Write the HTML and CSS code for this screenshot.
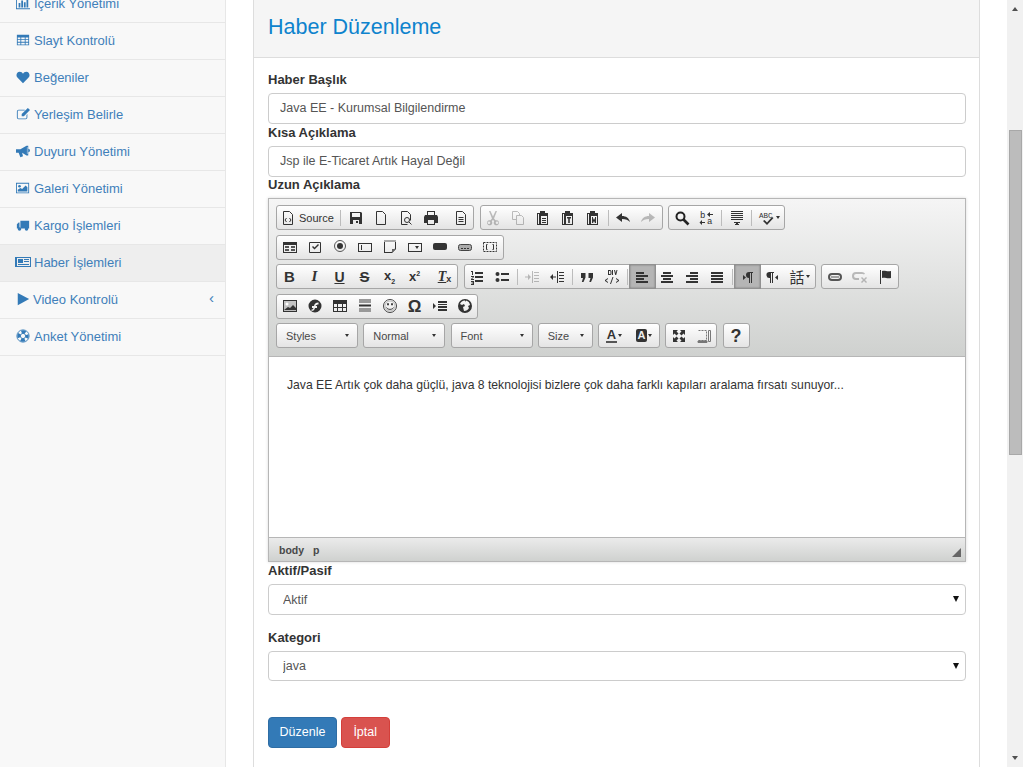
FILE: index.html
```html
<!DOCTYPE html>
<html lang="tr">
<head>
    <meta charset="UTF-8">
    <title>Haber Düzenleme</title>
    <link rel="stylesheet" href="styles.css">
</head>
<body>
<div class="page">
    <nav class="sidebar">
        <a class="side-item"><svg class="side-icon" viewBox="0 0 16 16"><path d="M0 2h1v12h15v1H0z"/><path d="M3 8h2v5H3zM6 5h2v8H6zM9 7h2v6H9zM12 3h2v10h-2z"/></svg>İçerik Yönetimi</a>
        <a class="side-item"><svg class="side-icon" viewBox="0 0 16 16"><path fill-rule="evenodd" d="M1 2h14v12H1zM2 5v2h3V5zm4 0v2h4V5zm5 0v2h3V5zM2 8v2h3V8zm4 0v2h4V8zm5 0v2h3V8zM2 11v2h3v-2zm4 0v2h4v-2zm5 0v2h3v-2z"/></svg>Slayt Kontrolü</a>
        <a class="side-item"><svg class="side-icon" viewBox="0 0 16 16"><path d="M8 15 1.600 8.600C-.6 6.200.8 2 4.300 2 6 2 7.300 3 8 4.200 8.700 3 10 2 11.700 2c3.500 0 4.900 4.200 2.700 6.600z"/></svg>Beğeniler</a>
        <a class="side-item"><svg class="side-icon" viewBox="0 0 16 16"><path d="M3 3h7v1H3a1 1 0 0 0-1 1v7a1 1 0 0 0 1 1h8a1 1 0 0 0 1-1V9l1-1v4a2 2 0 0 1-2 2H3a2 2 0 0 1-2-2V5a2 2 0 0 1 2-2z"/><path d="M13.500 1 16 3.500 9 10.500H6.500V8z"/></svg>Yerleşim Belirle</a>
        <a class="side-item"><svg class="side-icon" viewBox="0 0 16 16"><path fill-rule="evenodd" d="M0 6h5l7-4h2v11h-2L7 10l1 4-3 1-2-5H0zM12.500 3.500v8h.5v-8z"/><path d="M14 5.500a2 2 0 0 1 0 4z"/></svg>Duyuru Yönetimi</a>
        <a class="side-item"><svg class="side-icon" viewBox="0 0 16 16"><path fill-rule="evenodd" d="M0 2h15v12H0zm1 1v10h13V3z"/><circle cx="4" cy="6" r="1.500"/><path d="M2 12V10l3-2 2 1 4-4 2 2v5z"/></svg>Galeri Yönetimi</a>
        <a class="side-item"><svg class="side-icon" viewBox="0 0 16 16"><path d="M5 3h10v9H5zM1 7l2-2h1v7H1z"/><circle cx="4" cy="12.500" r="2"/><circle cx="12" cy="12.500" r="2"/></svg>Kargo İşlemleri</a>
        <a class="side-item is-current"><svg class="side-icon wide" viewBox="0 0 16 14"><path fill-rule="evenodd" d="M0 2h16v10H0zm2 1v8h13V3z"/><path d="M3 4h5v4H3zM9 4h5v1H9zM9 6h5v1H9zM3 9h11v1H3z"/></svg>Haber İşlemleri</a>
        <a class="side-item video"><svg class="side-icon" viewBox="0 0 16 16"><path d="M2 1 15 8 2 15z"/></svg>Video Kontrolü<span class="side-arrow">‹</span></a>
        <a class="side-item"><svg class="side-icon" viewBox="0 0 16 16"><circle cx="8" cy="8" r="7" fill="none" stroke="#337ab7"/><circle cx="8" cy="8" r="3" fill="none" stroke="#337ab7"/><circle class="ring" cx="8" cy="8" r="4.750" fill="none" stroke="#337ab7" stroke-width="3.500" stroke-dasharray="4.700 2.760" stroke-dashoffset="2.350"/></svg>Anket Yönetimi</a>
    </nav>

    <main class="content">
        <section class="panel">
            <h2 class="panel-title">Haber Düzenleme</h2>
            <form class="panel-body">
                <label class="field-label">Haber Başlık</label>
                <input class="field" type="text" value="Java EE - Kurumsal Bilgilendirme">
                <label class="field-label">Kısa Açıklama</label>
                <input class="field" type="text" value="Jsp ile E-Ticaret Artık Hayal Değil">
                <label class="field-label tight">Uzun Açıklama</label>

                <div class="editor">
                    <div class="toolbar">
                        <div class="tb-row">
                            <div class="tb-group">
                                <span class="tb-btn source"><svg viewBox="0 0 16 16" fill="none" stroke="#333"><path d="M3.500 1.500h6l3 3v10h-9z"/><path d="M6.500 8 5 10l1.500 2M9.500 8 11 10l-1.500 2"/></svg>Source</span>
                                <i class="tb-sep"></i>
                                <span class="tb-btn"><svg viewBox="0 0 16 16"><path fill-rule="evenodd" d="M2 2h11l1 1v11H2zm2 1v4h8V3zm1 7v4h6v-4z"/><path d="M8 11h2v2H8z"/></svg></span>
                                <span class="tb-btn"><svg viewBox="0 0 16 16" fill="none" stroke="#333"><path d="M3.500 1.500h6l3 3v10h-9z"/></svg></span>
                                <span class="tb-btn"><svg viewBox="0 0 16 16" fill="none" stroke="#333"><path d="M3.500 14.500v-13h6l3 3v6M3.500 14.500h6"/><circle cx="9" cy="10" r="2.500"/><path d="m11 12 2.500 2.500"/></svg></span>
                                <span class="tb-btn"><svg viewBox="0 0 16 16"><path fill-rule="evenodd" d="M4 1h8v4h2l1 2v6h-3v2H4v-2H1V7l1-2h2zm1 1v3h6V2zm0 8v4h6v-4z"/></svg></span>
                                <span class="tb-btn shift"><svg viewBox="0 0 16 16" fill="none" stroke="#333"><path d="M3.500 1.500h6l3 3v10h-9z"/><path d="M5.500 7.500h5M5.500 9.500h5M5.500 11.500h5"/></svg></span>
                            </div>
                            <div class="tb-group pad">
                                <span class="tb-btn off"><svg viewBox="0 0 16 16"><path fill-rule="evenodd" d="M4 1h1.500L8 6.500 10.500 1H12L9 8.500l1.500 1.800a2.600 2.600 0 1 1-1.300 1L8 9.800l-1.200 1.500a2.600 2.600 0 1 1-1.300-1L7 8.500zM4 11.500a1.300 1.300 0 1 0 0 2.600 1.300 1.300 0 0 0 0-2.600zm8 0a1.300 1.300 0 1 0 0 2.600 1.300 1.300 0 0 0 0-2.600z"/></svg></span>
                                <span class="tb-btn off"><svg viewBox="0 0 16 16" fill="none" stroke="#333"><path d="M2.500 1.500h5l2 2v6h-7z"/><path d="M6.500 5.500h5l2 2v7h-7z" fill="#eee"/></svg></span>
                                <span class="tb-btn"><svg viewBox="0 0 16 16"><path fill-rule="evenodd" d="M2 3h3V1h5v2h3v12H2zm1 1v10h1V4zm3 2v8h6V6z"/><path d="M7 8h4v1H7zM7 10h4v1H7zM7 12h4v1H7z"/></svg></span>
                                <span class="tb-btn"><svg viewBox="0 0 16 16"><path fill-rule="evenodd" d="M2 3h3V1h5v2h3v12H2zm1 1v10h1V4zm3 2v8h6V6z"/><path d="M7 7h4v1.500H9.800V13H8.200V8.500H7z"/></svg></span>
                                <span class="tb-btn"><svg viewBox="0 0 16 16"><path fill-rule="evenodd" d="M2 3h3V1h5v2h3v12H2zm1 1v10h1V4zm3 2v8h6V6z"/><path d="M7 7h1v3l1-2 1 2V7h1v6h-1l-1-2-1 2H7z"/></svg></span>
                                <i class="tb-sep"></i>
                                <span class="tb-btn"><svg viewBox="0 0 16 16"><path d="M7 3v3c4 0 7 2 8 6-2-2-4-3-8-3v3L1 7.500z"/></svg></span>
                                <span class="tb-btn off"><svg viewBox="0 0 16 16"><path d="M9 3v3c-4 0-7 2-8 6 2-2 4-3 8-3v3l6-4.500z"/></svg></span>
                            </div>
                            <div class="tb-group">
                                <span class="tb-btn"><svg viewBox="0 0 16 16" fill="none" stroke="#222" stroke-width="2"><circle cx="6.500" cy="6.500" r="4"/><path d="m9.500 9.500 5 5" stroke-width="2.600"/></svg></span>
                                <span class="tb-btn"><svg viewBox="0 0 16 16"><text x="1" y="8" font-family="Liberation Mono" font-size="9" fill="#333">b</text><text x="8" y="14" font-family="Liberation Mono" font-size="9" fill="#333">a</text><path d="M11 1v2h3v1h-3v2L8 3.500zM3 9v2h3v1H3v2l-2.500-2.500z" transform="translate(0 1)"/></svg></span>
                                <i class="tb-sep"></i>
                                <span class="tb-btn"><svg viewBox="0 0 16 16"><path d="M2 1h12v1H2zM2 3h12v1H2zM2 5h12v1H2zM2 7h12v1H2zM2 9h12v1H2zM5 12h6v1H9v1h1v1H6v-1h1v-1H5z"/></svg></span>
                                <i class="tb-sep"></i>
                                <span class="tb-btn wide-btn"><svg viewBox="0 0 16 16"><text x="0" y="8" font-family="Liberation Mono" font-size="7.500" fill="#333">ABC</text><path d="m4 11 1.500-1L8 12.500 13 7l1.500 1L8 15z"/></svg><b class="caret"></b></span>
                            </div>
                        </div>
                        <div class="tb-row">
                            <div class="tb-group pad">
                                <span class="tb-btn"><svg viewBox="0 0 16 16"><path fill-rule="evenodd" d="M1 3h14v11H1zm1 3v7h12V6z"/><path d="M3 7h4v2H3zM9 7h4v2H9zM3 10h4v2H3zM9 10h4v2H9z" fill="#555"/></svg></span>
                                <span class="tb-btn"><svg viewBox="0 0 16 16"><path fill-rule="evenodd" d="M3 3h10a1 1 0 0 1 1 1v9a1 1 0 0 1-1 1H3a1 1 0 0 1-1-1V4a1 1 0 0 1 1-1zm0 1v9h10V4z"/><path d="M5 8l1-1 1.500 1.500L11 5l1 1-4.500 4.500z"/></svg></span>
                                <span class="tb-btn"><svg viewBox="0 0 16 16"><circle cx="8" cy="7" r="5.500" fill="none" stroke="#555"/><circle cx="8" cy="7" r="3"/></svg></span>
                                <span class="tb-btn"><svg viewBox="0 0 16 16"><path fill-rule="evenodd" d="M1 4h14v9H1zm1 1v7h12V5z"/><path d="M4 6h1v5H4z"/></svg></span>
                                <span class="tb-btn"><svg viewBox="0 0 16 16"><path fill-rule="evenodd" d="M2 2h12v8l-4 4H2zm1 1v10h6.500L13 9.500V3z"/><path d="M10 14v-4h4z" fill="#666"/><path d="M2 1h12v2H2z" fill="#aaa"/></svg></span>
                                <span class="tb-btn"><svg viewBox="0 0 16 16"><path fill-rule="evenodd" d="M1 4h14v9H1zm1 1v7h12V5z"/><path d="M8 7h4l-2 3z"/></svg></span>
                                <span class="tb-btn"><svg viewBox="0 0 16 16"><rect x="1" y="4" width="14" height="7" rx="2"/></svg></span>
                                <span class="tb-btn"><svg viewBox="0 0 16 16"><rect x="1.500" y="5.500" width="13" height="6" rx="2" fill="#aaa" stroke="#444"/><path d="M4 9h2v1H4zM7 9h2v1H7zM10 9h2v1h-2z"/></svg></span>
                                <span class="tb-btn"><svg viewBox="0 0 16 16" fill="none" stroke="#333"><path d="M1.500 3.500h13v9h-13z" stroke-dasharray="2 1"/><path d="M5.500 5.500h-1v5h1M10.500 5.500h1v5h-1"/></svg></span>
                            </div>
                        </div>
                        <div class="tb-row">
                            <div class="tb-group">
                                <span class="tb-btn"><span class="glyph bold">B</span></span>
                                <span class="tb-btn"><span class="glyph italic">I</span></span>
                                <span class="tb-btn"><span class="glyph under">U</span></span>
                                <span class="tb-btn"><span class="glyph strike">S</span></span>
                                <span class="tb-btn"><span class="glyph small">x<sub>2</sub></span></span>
                                <span class="tb-btn"><span class="glyph small">x<sup>2</sup></span></span>
                                <span class="tb-btn shift"><span class="glyph italic under">T</span><span class="glyph tiny">x</span></span>
                            </div>
                            <div class="tb-group">
                                <span class="tb-btn"><svg viewBox="0 0 16 16"><path d="M6 3h8v2H6zM6 7h8v2H6zM6 11h8v2H6zM2 2h2v4H3V3H2zM2 7h3v1l-2 2h2v1H2v-1l2-2H2zM2 12h3v4H2v-1h2v-.5H2.500v-1H4V13H2z"/></svg></span>
                                <span class="tb-btn"><svg viewBox="0 0 16 16"><circle cx="3.500" cy="5" r="2"/><circle cx="3.500" cy="11" r="2"/><path d="M7 4h8v2H7zM7 10h8v2H7z"/></svg></span>
                                <i class="tb-sep"></i>
                                <span class="tb-btn off"><svg viewBox="0 0 16 16"><path d="M8 2h1v12H8zM10 3h5v1h-5zM10 6h5v1h-5zM10 9h5v1h-5zM10 12h5v1h-5zM1 7.500h3V5l3 3-3 3V8.500H1z"/></svg></span>
                                <span class="tb-btn"><svg viewBox="0 0 16 16"><path d="M8 2h1v12H8zM10 3h5v1h-5zM10 6h5v1h-5zM10 9h5v1h-5zM10 12h5v1h-5zM7 7.500H4V5L1 8l3 3V8.500h3z"/></svg></span>
                                <i class="tb-sep"></i>
                                <span class="tb-btn"><svg viewBox="0 0 16 16"><path d="M2 4h4.500v4.500L4.500 13H2.800L4 9H2zM9.500 4H14v4.500L12 13h-1.700l1.200-4h-2z"/></svg></span>
                                <span class="tb-btn"><svg viewBox="0 0 16 16"><path d="M4 1h2a1.500 1.500 0 0 1 1.500 1.500v2A1.500 1.500 0 0 1 6 6H4zm1 1v3h1a.5.5 0 0 0 .5-.5v-2A.5.5 0 0 0 6 2zM8 1h1v5H8zM10 1h1l.8 3 .7-3h1l-1.300 5h-1zM1 11l3-2v1l-2 1.500L4 13v1l-3-2zM15 11l-3-2v1l2 1.500L12 13v1l3-2zM6 15l2.500-7h1L7 15z"/></svg></span>
                                <i class="tb-sep"></i>
                                <span class="tb-btn is-on"><svg viewBox="0 0 16 16"><path d="M2 3h8v2H2zM2 6h12v2H2zM2 9h8v2H2zM2 12h12v2H2z"/></svg></span>
                                <span class="tb-btn"><svg viewBox="0 0 16 16"><path d="M4 3h8v2H4zM2 6h12v2H2zM4 9h8v2H4zM2 12h12v2H2z"/></svg></span>
                                <span class="tb-btn"><svg viewBox="0 0 16 16"><path d="M6 3h8v2H6zM2 6h12v2H2zM6 9h8v2H6zM2 12h12v2H2z"/></svg></span>
                                <span class="tb-btn"><svg viewBox="0 0 16 16"><path d="M2 3h12v2H2zM2 6h12v2H2zM2 9h12v2H2zM2 12h12v2H2z"/></svg></span>
                                <i class="tb-sep"></i>
                                <span class="tb-btn is-on"><svg viewBox="0 0 16 16"><path d="M9 3h5v1h-1v10h-1V4h-1v10h-1V9a3 3 0 0 1 0-6zM4 6v5l3-2.500z" fill="#333"/></svg></span>
                                <span class="tb-btn"><svg viewBox="0 0 16 16"><path d="M5 3h5v1H9v10H8V4H7v10H6V9a3 3 0 0 1-1-6zM14 6v5l-3-2.500z"/></svg></span>
                                <span class="tb-btn wide-btn"><span class="glyph lang">話</span><b class="caret"></b></span>
                            </div>
                            <div class="tb-group pad">
                                <span class="tb-btn"><svg viewBox="0 0 16 16"><path fill-rule="evenodd" d="M5 4h6a4 4 0 0 1 0 8H5a4 4 0 0 1 0-8zm0 2a2 2 0 0 0 0 4h6a2 2 0 0 0 0-4z" fill="#555"/><path d="M4 7.500h8v1H4z" fill="#555"/></svg></span>
                                <span class="tb-btn off"><svg viewBox="0 0 16 16"><path fill-rule="evenodd" d="M4 3h6a4 4 0 0 1 3 1.500l-1 1A2 2 0 0 0 10 5H4a1.500 1.500 0 0 0 0 4h3v2H4a4 4 0 0 1 0-8z"/><path d="m9 9 1-1 2 2 2-2 1 1-2 2 2 2-1 1-2-2-2 2-1-1 2-2z"/></svg></span>
                                <span class="tb-btn"><svg viewBox="0 0 16 16"><path d="M3 1h1v14H3zM5 2c3-1 5 1 9 0v7c-4 1-6-1-9 0z"/></svg></span>
                            </div>
                        </div>
                        <div class="tb-row">
                            <div class="tb-group">
                                <span class="tb-btn"><svg viewBox="0 0 16 16"><path fill-rule="evenodd" d="M1 2h14v12H1zm1 1v10h12V3z"/><path d="M2 3h12v10H2z" fill="#777" opacity=".4"/><circle cx="5" cy="6" r="1.500" fill="#fff"/><path d="M2 12l4-3 2 1 3-3 3 3v2z"/></svg></span>
                                <span class="tb-btn"><svg viewBox="0 0 16 16"><path fill-rule="evenodd" d="M8 1.500a6.500 6.500 0 1 1 0 13 6.500 6.500 0 0 1 0-13zM11.500 4.500c-3 0-4 1.500-4.500 3.500H5v2h1.500C6 11 5.500 11.500 4.500 11.500v1.500c2 0 3-1 3.500-3h2V8H8.500c.5-1 1.500-1.500 3-1.500z"/></svg></span>
                                <span class="tb-btn"><svg viewBox="0 0 16 16"><path fill-rule="evenodd" d="M1 2h14v12H1zm1 4v3h3V6zm4 0v3h4V6zm5 0v3h3V6zM2 10v3h3v-3zm4 0v3h4v-3zm5 0v3h3v-3z"/></svg></span>
                                <span class="tb-btn"><svg viewBox="0 0 16 16"><path d="M2 1h12v4H2zM2 10h12v4H2z" fill="#999"/><path d="M2 6.500h12v2H2z" fill="#333"/></svg></span>
                                <span class="tb-btn"><svg viewBox="0 0 16 16" fill="none" stroke="#444"><circle cx="8" cy="8" r="6.500"/><circle cx="8" cy="8" r="5" stroke="#bbb"/><path d="M5.500 5.500h1v1.500h-1zM9.500 5.500h1v1.500h-1zM4.500 9.500c1 2.500 6 2.500 7 0"/></svg></span>
                                <span class="tb-btn"><span class="glyph omega">Ω</span></span>
                                <span class="tb-btn"><svg viewBox="0 0 16 16"><path d="M6 3h9v2H6zM6 6h9v1H6zM6 8h9v2H6zM6 11h9v2H6zM1 5l3 3-3 3z"/></svg></span>
                                <span class="tb-btn"><svg viewBox="0 0 16 16"><path fill-rule="evenodd" d="M8 1a7 7 0 1 1 0 14A7 7 0 0 1 8 1zM8 2.500A5.500 5.500 0 0 0 3 6l2 1 2-1 1 2-2 1 1 4a5.500 5.500 0 0 0 5-3l-1-2 2-1A5.500 5.500 0 0 0 9 2.500L8 4z"/></svg></span>
                            </div>
                        </div>
                        <div class="tb-row combos">
                            <div class="tb-combo c-wide">Styles<b class="caret"></b></div>
                            <div class="tb-combo c-wide">Normal<b class="caret"></b></div>
                            <div class="tb-combo c-wide">Font<b class="caret"></b></div>
                            <div class="tb-combo c-size">Size<b class="caret"></b></div>
                            <div class="tb-group">
                                <span class="tb-btn colour"><span class="glyph text-colour">A</span><b class="caret"></b></span>
                                <span class="tb-btn colour"><span class="glyph back-colour">A</span><b class="caret"></b></span>
                            </div>
                            <div class="tb-group">
                                <span class="tb-btn"><svg viewBox="0 0 16 16"><path d="M2 2h5L5.500 3.500 7.500 5.500 5.500 7.500 3.500 5.500 2 7zM14 2v5l-1.500-1.500-2 2-2-2 2-2L9 2zM2 14V9l1.500 1.500 2-2 2 2-2 2L7 14zM14 14H9l1.500-1.500-2-2 2-2 2 2L14 9z"/></svg></span>
                                <span class="tb-btn"><svg viewBox="0 0 16 16" fill="none" stroke="#777"><path d="M2.500 2.500h8v10h-8" stroke-dasharray="2 1"/><path d="M12.500 2.500h2v11h-2z"/><path d="M2 13h9v1.500H2z" fill="#777"/></svg></span>
                            </div>
                            <div class="tb-group">
                                <span class="tb-btn help"><span class="glyph help-mark">?</span></span>
                            </div>
                        </div>
                    </div>
                    <div class="editor-text">
                        <p>Java EE Artık çok daha güçlü, java 8 teknolojisi bizlere çok daha farklı kapıları aralama fırsatı sunuyor...</p>
                    </div>
                    <div class="editor-path">
                        <span>body</span><span>p</span>
                        <svg class="resizer" viewBox="0 0 9 9"><path d="M9 0v9H0z"/></svg>
                    </div>
                </div>

                <label class="field-label after-editor">Aktif/Pasif</label>
                <div class="pick-wrap">
                    <select class="field pick"><option>Aktif</option></select>
                </div>
                <label class="field-label second">Kategori</label>
                <div class="pick-wrap short">
                    <select class="field pick"><option>java</option></select>
                </div>

                <div class="actions">
                    <button class="btn btn-primary" type="button">Düzenle</button>
                    <button class="btn btn-danger" type="button">İptal</button>
                </div>
            </form>
        </section>
    </main>

    <div class="scrollbar">
        <span class="scroll-up"></span>
        <span class="scroll-thumb"></span>
        <span class="scroll-down"></span>
    </div>
</div>
</body>
</html>
```

FILE: styles.css
```css
/* base */
html, body {
  margin: 0;
  height: 767px;
  overflow: hidden;
}

body {
  font-family: "Liberation Sans", Arial, sans-serif;
  font-size: 13px;
  color: #333;
  background: #fff;
}

.page {
  display: flex;
  height: 767px;
}

/* left menu, scrolled a little past its first row */
.sidebar {
  width: 225px;
  flex: none;
  margin-top: -14px;
  height: 781px;
  background: #f8f8f8;
  border-right: 1px solid #e7e7e7;
}

.side-item {
  display: flex;
  align-items: center;
  box-sizing: border-box;
  height: 37px;
  padding: 0 0 2px 16px;
  border-bottom: 1px solid #e7e7e7;
  color: #3f7fba;
  font-size: 13px;
  position: relative;
}

.side-item.is-current {
  background: #eee;
}

.side-icon {
  width: 14px;
  height: 14px;
  margin-right: 4px;
  fill: #337ab7;
  flex: none;
}

.side-icon.wide {
  width: 16px;
  margin-left: -1px;
  margin-right: 3px;
}

.side-item.video .side-icon {
  margin-right: 3px;
}

.side-arrow {
  position: absolute;
  right: 11px;
  top: 7px;
  font-size: 15px;
}

/* main column */
.content {
  flex: 1;
  padding: 0 26px 0 27px;
  min-width: 0;
}

.panel {
  margin-top: -10px;
  border: 1px solid #ddd;
  height: 900px;
}

.panel-title {
  margin: 0;
  height: 67px;
  line-height: 72px;
  box-sizing: border-box;
  padding-left: 14px;
  background: #f5f5f5;
  border-bottom: 1px solid #ddd;
  color: #0e83cd;
  font-size: 21.500px;
  font-weight: normal;
}

.panel-body {
  padding: 14px 13px 0 14px;
}

.field-label {
  display: block;
  font-size: 13px;
  font-weight: bold;
  line-height: 15px;
  margin-bottom: 6px;
}

.field-label.tight {
  margin-top: -1px;
}

.field {
  display: block;
  box-sizing: border-box;
  width: 100%;
  height: 31px;
  margin-bottom: 1px;
  padding: 0 11px 2px;
  border: 1px solid #ccc;
  border-radius: 4px;
  background: #fff;
  color: #555;
  font-family: inherit;
  font-size: 12.500px;
}

.pick-wrap {
  position: relative;
}

.pick-wrap::after {
  content: "";
  position: absolute;
  right: 7px;
  top: 12px;
  width: 0;
  height: 0;
  border-left: 3px solid transparent;
  border-right: 3px solid transparent;
  border-top: 6px solid #111;
}

.pick {
  appearance: none;
  padding: 0 0 0 14px;
  margin-bottom: 0;
}

.short .pick {
  height: 30px;
}

.after-editor {
  margin-top: 1px;
}

.second {
  margin-top: 15px;
}

/* editor */
.editor {
  border: 1px solid #b6b6b6;
  box-shadow: 0 0 3px rgba(0, 0, 0, 0.15);
}

.toolbar {
  box-sizing: border-box;
  height: 158px;
  padding: 6px 7px 0;
  background: linear-gradient(#f5f5f5, #cfd1cf);
  border-bottom: 1px solid #b6b6b6;
}

.tb-row {
  display: flex;
  gap: 5.500px;
  height: 25px;
  margin-bottom: 4.500px;
}

.tb-row.combos {
  gap: 5.250px;
}

.tb-group {
  display: flex;
  align-items: center;
  height: 25px;
  box-sizing: border-box;
  border: 1px solid #a6a6a6;
  border-radius: 3px;
  background: linear-gradient(#fff, #e4e4e4);
}

.tb-group.pad {
  padding-right: 1px;
}

.tb-btn {
  display: flex;
  align-items: center;
  justify-content: center;
  width: 25px;
  height: 23px;
  color: #333;
  position: relative;
}

.tb-btn svg {
  width: 16px;
  height: 16px;
  overflow: visible;
}

.tb-btn svg:not([fill]) {
  fill: #333;
}

.tb-btn.off {
  opacity: 0.3;
}

.tb-btn.is-on {
  background: #b5b5b5;
  box-shadow: inset 0 0 2px #707070;
  outline: 1px solid #919191;
}

.tb-btn.shift {
  margin-left: 5px;
}

.tb-btn.source {
  width: 61px;
  justify-content: flex-start;
  padding-left: 3px;
  box-sizing: border-box;
  gap: 3px;
  font-size: 11px;
}

.tb-btn.wide-btn {
  width: 30px;
  gap: 1px;
}

.tb-btn.colour {
  width: 30px;
  gap: 1px;
}

.tb-sep {
  width: 1px;
  height: 16px;
  background: #bcbcbc;
  margin: 0 2px;
  flex: none;
}

.caret {
  width: 0;
  height: 0;
  border-left: 2.500px solid transparent;
  border-right: 2.500px solid transparent;
  border-top: 3px solid #333;
}

.tb-combo {
  box-sizing: border-box;
  height: 25px;
  display: flex;
  align-items: center;
  justify-content: space-between;
  padding: 0 8px 0 9px;
  border: 1px solid #a6a6a6;
  border-radius: 3px;
  background: linear-gradient(#fff, #e4e4e4);
  font-size: 11px;
  color: #484848;
}

.c-wide {
  width: 82px;
}

.c-size {
  width: 55px;
}

.glyph {
  font-family: "Liberation Sans", sans-serif;
  line-height: 1;
  color: #333;
}

.bold {
  font-size: 15px;
  font-weight: bold;
}

.italic {
  font-size: 15px;
  font-weight: bold;
  font-style: italic;
  font-family: "Liberation Serif", serif;
}

.under {
  font-size: 14px;
  font-weight: bold;
  text-decoration: underline;
}

.strike {
  font-size: 15px;
  font-weight: bold;
  text-decoration: line-through;
}

.small {
  font-size: 13px;
  font-weight: bold;
}

.small sub, .small sup {
  font-size: 7px;
}

.tiny {
  font-size: 9px;
  font-weight: bold;
  align-self: flex-end;
  margin-bottom: 4px;
}

.omega {
  font-size: 17px;
  font-weight: bold;
}

.lang {
  font-family: "Noto Sans CJK TC", "Noto Sans CJK SC", sans-serif;
  font-size: 15px;
}

.text-colour {
  font-size: 13px;
  font-weight: bold;
  border-bottom: 2px solid #555;
  padding: 0 1px;
}

.back-colour {
  font-size: 11px;
  font-weight: bold;
  background: #333;
  color: #eee;
  border-radius: 2px;
  padding: 1px 2px;
}

.help-mark {
  font-size: 18px;
  font-weight: bold;
}

.editor-text {
  box-sizing: border-box;
  height: 180px;
  padding: 21px 18px 0;
  background: #fff;
  font-size: 12.180px;
  color: #333;
}

.editor-text p {
  margin: 0;
}

.editor-path {
  position: relative;
  box-sizing: border-box;
  height: 24px;
  display: flex;
  align-items: center;
  gap: 9px;
  padding-left: 10px;
  background: linear-gradient(#ebebeb, #cfd1cf);
  border-top: 1px solid #b6b6b6;
  color: #484848;
  font-size: 10.500px;
  font-weight: bold;
}

.resizer {
  position: absolute;
  right: 4px;
  bottom: 4px;
  width: 9px;
  height: 9px;
  fill: #666;
}

/* form buttons */
.actions {
  margin-top: 36px;
  display: flex;
  gap: 4px;
}

.btn {
  height: 31px;
  padding: 0 11px 1px;
  border: 1px solid;
  border-radius: 4px;
  color: #fff;
  font-family: inherit;
  font-size: 12.500px;
}

.btn-primary {
  background: #337ab7;
  border-color: #2e6da4;
  padding: 0 10.500px 1px;
}

.btn-danger {
  background: #d9534f;
  border-color: #d43f3a;
  padding: 0 11.500px 1px;
}

/* painted scrollbar, page is scrolled in the original */
.scrollbar {
  width: 16px;
  flex: none;
  margin-left: 1px;
  position: relative;
  background: #f1f1f1;
}

.scroll-thumb {
  position: absolute;
  left: 2px;
  top: 130px;
  width: 13px;
  height: 325px;
  box-sizing: border-box;
  border: 1px solid #a8a8a8;
  background: #bcbcbc;
}

.scroll-up, .scroll-down {
  position: absolute;
  left: 5px;
  width: 0;
  height: 0;
  border-left: 3.500px solid transparent;
  border-right: 3.500px solid transparent;
}

.scroll-up {
  top: 7px;
  border-bottom: 4px solid #505050;
}

.scroll-down {
  bottom: 7px;
  border-top: 4px solid #505050;
}
```
